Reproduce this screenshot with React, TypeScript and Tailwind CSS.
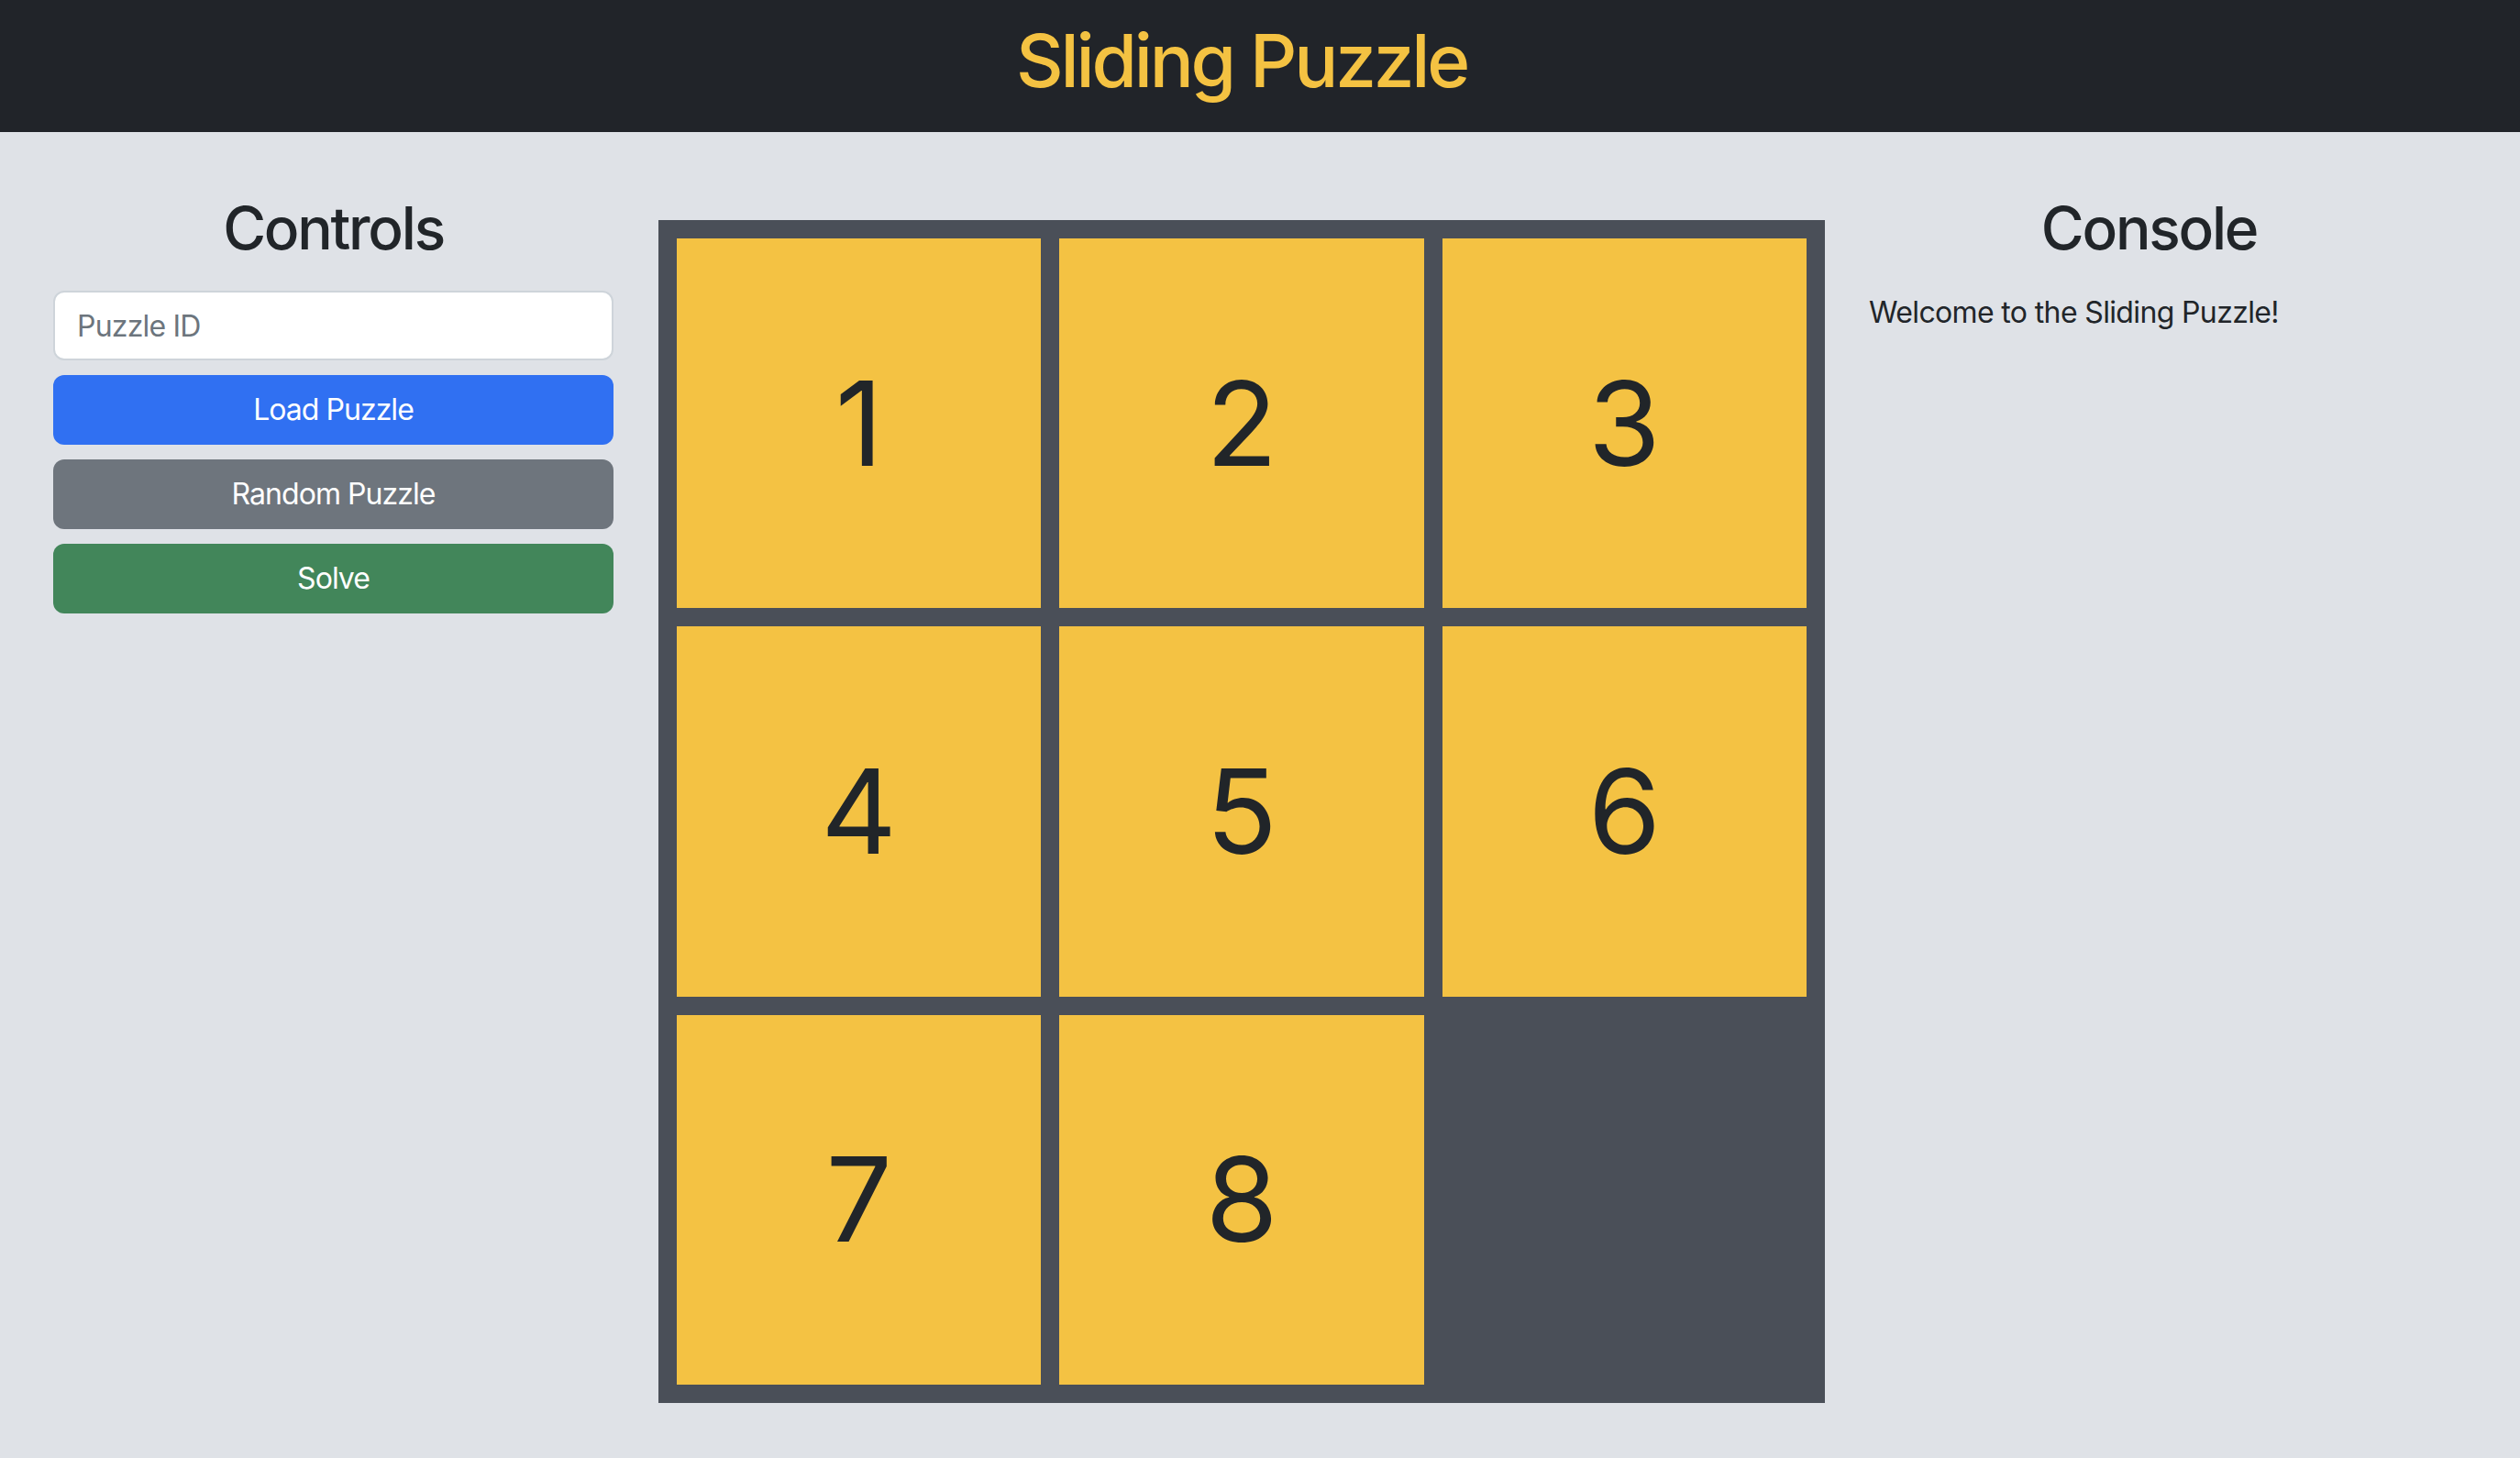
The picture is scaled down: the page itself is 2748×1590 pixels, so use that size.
import React from "react";

const tiles = [1, 2, 3, 4, 5, 6, 7, 8, 0];

export default function App() {
  return (
    <div className="min-h-screen bg-[#dfe2e7] font-['Inter',sans-serif] text-[#212529]">
      <header className="bg-[#212429] pt-[18px] pb-[30px] pr-[40px]">
        <h1 className="text-center text-[80px] leading-[96px] font-medium tracking-[-0.04em] text-[#f4c242]">
          Sliding Puzzle
        </h1>
      </header>

      <main className="flex items-start pl-[58px] pt-[48px]">
        <div className="controls w-[611px] flex flex-col">
          <h2 className="mt-[18px] mb-[30px] text-center text-[64px] leading-[77px] font-medium tracking-[-0.035em]">
            Controls
          </h2>
          <input
            type="text"
            placeholder="Puzzle ID"
            className="h-[76px] w-full rounded-[12px] border-2 border-[#ced4da] bg-white px-[24px] text-[32px] tracking-[-0.025em] text-[#212529] placeholder:text-[#6c757d] focus:outline-none"
          />
          <button className="mt-[16px] h-[76px] w-full rounded-[12px] bg-[#3070f2] text-[32px] tracking-[-0.03em] text-white">
            Load Puzzle
          </button>
          <button className="mt-[16px] h-[76px] w-full rounded-[12px] bg-[#6e757d] text-[32px] tracking-[-0.03em] text-white">
            Random Puzzle
          </button>
          <button className="mt-[16px] h-[76px] w-full rounded-[12px] bg-[#42865a] text-[32px] tracking-[-0.03em] text-white">
            Solve
          </button>
        </div>

        <div className="board ml-[49px] mt-[48px] grid h-[1290px] w-[1272px] grid-cols-3 grid-rows-3 gap-[20px] bg-[#4a4f58] p-[20px]">
          {tiles.map((n) =>
            n === 0 ? (
              <div key={n} />
            ) : (
              <div
                key={n}
                className="flex items-center justify-center bg-[#f4c243] text-[128px] leading-none text-[#212529]"
              >
                {n}
              </div>
            )
          )}
        </div>

        <div className="console ml-[48px] w-[611px]">
          <h2 className="mt-[18px] mb-[30px] text-center text-[64px] leading-[77px] font-medium tracking-[-0.035em]">
            Console
          </h2>
          <p className="text-[32px] leading-[48px] tracking-[-0.02em]">Welcome to the Sliding Puzzle!</p>
        </div>
      </main>
    </div>
  );
}
